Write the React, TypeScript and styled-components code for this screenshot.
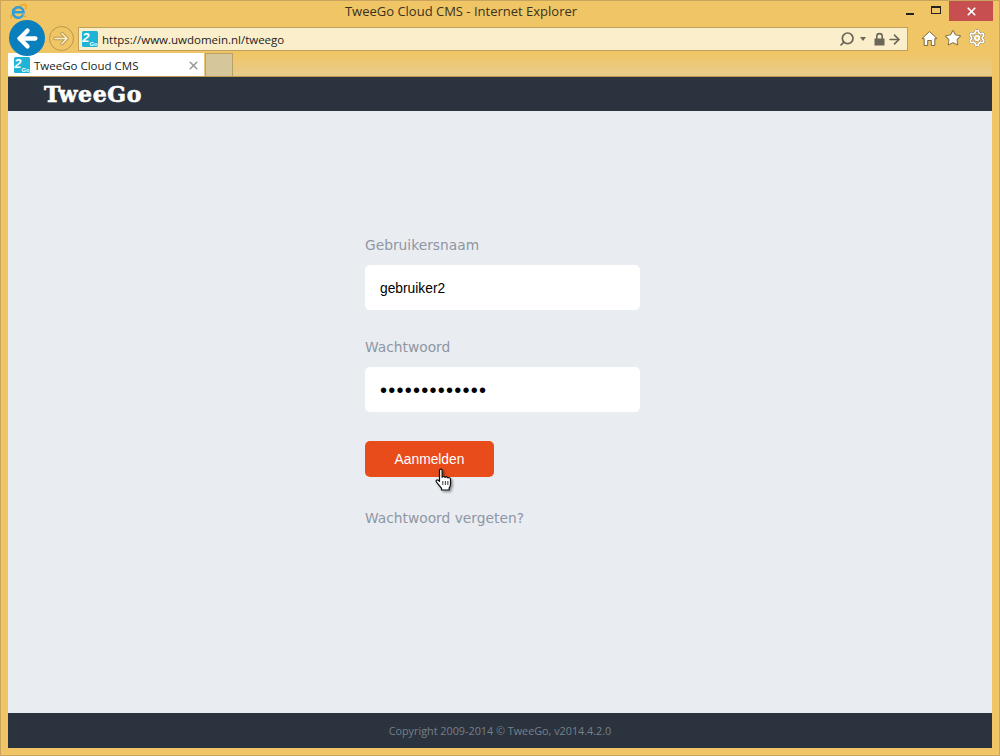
import React from 'react';
import styled, { createGlobalStyle } from 'styled-components';
import { ArrowLeft, ArrowRight, Star, Settings, Search, X } from 'lucide-react';

const GlobalStyle = createGlobalStyle`
  html, body {
    margin: 0;
    padding: 0;
    background: #f0c566;
  }
`;

const FaviconIcon: React.FunctionComponent<{ size: number }> = ({ size }) => (
  <svg width={size} height={size} viewBox="0 0 16 16">
    <rect width="16" height="16" rx="1.5" fill="#1fb3d6" />
    <text x="0.3" y="11" fontFamily="Liberation Sans, sans-serif" fontStyle="italic" fontWeight="700" fontSize="13" fill="#fff">2</text>
    <text x="7.6" y="14.6" fontFamily="Liberation Sans, sans-serif" fontWeight="700" fontSize="5.8" fill="#fff">Go</text>
  </svg>
);

const IeIcon = () => (
  <svg width="17" height="17" viewBox="0 0 17 17">
    <path d="M1.2 15.600C.2 13 5.500 3.500 13.500 1.500c3-.7 3.200 2 2 4.500" fill="none" stroke="#e9a92a" strokeWidth="1.600" />
    <path d="M13.300 11.300a5.300 5.300 0 1 1 .3-2.100H4" fill="none" stroke="#2f9fdc" strokeWidth="2.500" />
    <path d="M13 12.500c1 .9 2 1.200 3 .8" fill="none" stroke="#e9a92a" strokeWidth="1.400" />
  </svg>
);

const HomeIcon = () => (
  <svg width="17" height="17" viewBox="0 0 17 17">
    <path
      d="M8.500 1.500L16 8.600h-2.200V15.500H10.300V10.500H6.700V15.500H3.200V8.600H1z"
      fill="#fff"
      stroke="#7d6a3d"
      strokeWidth="1"
      strokeLinejoin="round"
    />
  </svg>
);

const LockIcon = () => (
  <svg width="11" height="14" viewBox="0 0 11 14">
    <path d="M2.800 7V4.300a2.700 2.700 0 0 1 5.400 0V7" fill="none" stroke="#6b6657" strokeWidth="1.600" />
    <rect x="0.500" y="6.500" width="10" height="7" fill="#6b6657" />
  </svg>
);

const ForwardArrow = () => (
  <svg width="17" height="15" viewBox="0 0 17 15">
    <path d="M2 7.500h12M9 2.500l5 5-5 5" fill="none" stroke="#b9994f" strokeWidth="3.400" strokeLinejoin="round" strokeLinecap="round" />
    <path d="M2 7.500h12M9 2.500l5 5-5 5" fill="none" stroke="#fbeecb" strokeWidth="1.600" strokeLinejoin="round" strokeLinecap="round" />
  </svg>
);

const HandCursor = () => (
  <svg width="22" height="26" viewBox="0 0 20 26" preserveAspectRatio="none">
    <defs>
      <filter id="cursorShadow" x="-30%" y="-30%" width="160%" height="160%">
        <feDropShadow dx="1.500" dy="1.500" stdDeviation="1" floodColor="#000" floodOpacity="0.4" />
      </filter>
    </defs>
    <path
      d="M5 2.200c0-1.500 2.400-1.500 2.400 0v7c.5-1 2.300-1 2.600.2.600-.8 2.300-.7 2.600.5.8-.6 2.400-.3 2.400 1.100v5.600c0 1.600-.8 2.400-1.200 3.400v2H6.800v-1.800c-1-1.200-2.400-3.200-4.600-6.200-1-1.400.6-2.800 1.800-1.600l1 1z"
      fill="#fff"
      stroke="#111"
      strokeWidth="1.100"
      strokeLinejoin="round"
      filter="url(#cursorShadow)"
    />
    <path d="M8 13v4M10.300 13v4M12.600 13v4" stroke="#111" strokeWidth="0.8" />
  </svg>
);

const App: React.FunctionComponent = (): React.ReactElement => (
  <Window>
    <GlobalStyle />
    <TitleBar>
      <IeBadge>
        <IeIcon />
      </IeBadge>
      <Title>TweeGo Cloud CMS - Internet Explorer</Title>
      <WindowControls>
        <ControlButton>
          <MinimizeGlyph />
        </ControlButton>
        <ControlButton>
          <MaximizeGlyph />
        </ControlButton>
        <CloseButton>
          <X size={13} strokeWidth={3.2} color="#fff" />
        </CloseButton>
      </WindowControls>
    </TitleBar>

    <NavBar>
      <BackButton>
        <ArrowLeft size={27} strokeWidth={3.8} color="#fff" />
      </BackButton>
      <ForwardButton>
        <ForwardArrow />
      </ForwardButton>
      <AddressBar>
        <FaviconIcon size={16} />
        <AddressText>https://www.uwdomein.nl/tweego</AddressText>
        <AddressTools>
          <Search size={16} strokeWidth={2.6} color="#6b6657" style={{ transform: 'scaleX(-1)' }} />
          <Caret />
          <LockIcon />
          <ArrowRight size={15} strokeWidth={2.6} color="#6b6657" />
        </AddressTools>
      </AddressBar>
      <ToolIcons>
        <HomeIcon />
        <Star size={18} strokeWidth={1.4} color="#8b7a4c" fill="#fff" />
        <GearWrap>
          <Settings size={18} strokeWidth={2.6} color="#fff" />
        </GearWrap>
      </ToolIcons>
    </NavBar>

    <TabRow>
      <ActiveTab>
        <FaviconIcon size={16} />
        <TabLabel>TweeGo Cloud CMS</TabLabel>
        <X size={13} strokeWidth={3} color="#9a9a9a" />
      </ActiveTab>
      <NewTab />
    </TabRow>

    <Page>
      <Header>
        <Logo>TweeGo</Logo>
      </Header>
      <Main>
        <Field>
          <Label>Gebruikersnaam</Label>
          <Input type="text" value="gebruiker2" readOnly />
        </Field>
        <Field>
          <Label>Wachtwoord</Label>
          <PasswordInput type="password" value="wachtwoord123" readOnly />
        </Field>
        <SubmitWrap>
          <Submit>Aanmelden</Submit>
          <CursorSpot>
            <HandCursor />
          </CursorSpot>
        </SubmitWrap>
        <Forgot>Wachtwoord vergeten?</Forgot>
      </Main>
      <Footer>Copyright 2009-2014 © TweeGo, v2014.4.2.0</Footer>
    </Page>
  </Window>
);

export default App;

// Browser chrome

const Window = styled('div')`
  background: #f0c566;
  box-shadow: inset 0 0 0 1px #c9a45c;
  box-sizing: border-box;
  display: flex;
  flex-direction: column;
  height: 756px;
  overflow: hidden;
  padding: 0 8px 8px;
  width: 1000px;
`;

const TitleBar = styled('div')`
  align-items: flex-start;
  display: flex;
  flex: 0 0 auto;
  height: 20px;
  justify-content: center;
  position: relative;
`;

const IeBadge = styled('div')`
  left: 2px;
  position: absolute;
  top: 3px;
`;

const Title = styled('div')`
  color: #3a3220;
  font: 13px/22px 'Open Sans', sans-serif;
  padding-right: 78px;
`;

const WindowControls = styled('div')`
  align-items: flex-start;
  display: flex;
  position: absolute;
  right: -1px;
  top: 1px;
`;

const ControlButton = styled('div')`
  align-items: center;
  display: flex;
  height: 20px;
  justify-content: center;
  width: 26px;
`;

const MinimizeGlyph = styled('div')`
  background: #222;
  height: 2px;
  margin-top: 5px;
  width: 8px;
`;

const MaximizeGlyph = styled('div')`
  border: 1px solid #222;
  border-top-width: 2px;
  box-sizing: border-box;
  height: 8px;
  margin-bottom: 2px;
  width: 10px;
`;

const CloseButton = styled('div')`
  align-items: center;
  background: #c74f4f;
  display: flex;
  height: 20px;
  justify-content: center;
  width: 44px;
`;

const NavBar = styled('div')`
  align-items: center;
  display: flex;
  flex: 0 0 auto;
  height: 33px;
  position: relative;
  z-index: 2;
`;

const BackButton = styled('div')`
  align-items: center;
  background: #0a7fbd;
  border-radius: 50%;
  display: flex;
  flex: 0 0 auto;
  height: 36px;
  justify-content: center;
  margin: 3px 3px 0 1px;
  width: 36px;
`;

const ForwardButton = styled('div')`
  align-items: center;
  border: 1.500px solid #b9994f;
  border-radius: 50%;
  box-sizing: border-box;
  display: flex;
  flex: 0 0 auto;
  height: 25px;
  justify-content: center;
  margin: 4px 4px 0 1px;
  width: 25px;
`;

const AddressBar = styled('div')`
  align-items: center;
  background: #fbeecb;
  border: 1.500px solid #bf9f5b;
  box-sizing: border-box;
  display: flex;
  flex: 0 0 auto;
  height: 24px;
  margin-top: 5px;
  padding: 0 5px 0 3px;
  width: 830px;
`;

const AddressText = styled('span')`
  color: #1c1c1c;
  flex: 1;
  font: 11.500px 'Open Sans', sans-serif;
  margin-left: 4px;
`;

const AddressTools = styled('div')`
  align-items: center;
  display: flex;
  gap: 2px;
`;

const Caret = styled('div')`
  border-left: 3.500px solid transparent;
  border-right: 3.500px solid transparent;
  border-top: 4px solid #6b6657;
  height: 0;
  margin: 0 6px 0 3px;
  width: 0;
`;

const ToolIcons = styled('div')`
  align-items: center;
  display: flex;
  gap: 6px;
  margin: 3px 0 0 13px;
`;

const GearWrap = styled('div')`
  display: flex;
  filter: drop-shadow(0 0 0.6px #6d5a2d) drop-shadow(0 0 0.6px #6d5a2d);
`;

const TabRow = styled('div')`
  align-items: flex-end;
  background: linear-gradient(180deg, #f0c566 0%, #e8cb8c 100%);
  display: flex;
  flex: 0 0 auto;
  height: 23px;
`;

const ActiveTab = styled('div')`
  align-items: center;
  background: #fff;
  box-sizing: border-box;
  display: flex;
  height: 23px;
  padding: 1px 4px 0 6px;
  width: 196px;
`;

const TabLabel = styled('span')`
  color: #222;
  flex: 1;
  font: 11.500px 'Open Sans', sans-serif;
  margin-left: 4px;
`;

const NewTab = styled('div')`
  background: #d6c69c;
  border: 1px solid #b9a067;
  border-bottom: 0;
  box-sizing: border-box;
  height: 23px;
  margin-left: 1px;
  width: 28px;
`;

// Page

const Page = styled('div')`
  background: #e9ecf1;
  display: flex;
  flex: 1;
  flex-direction: column;
  min-height: 0;
`;

const Header = styled('div')`
  align-items: center;
  background: #2a333e;
  border-top: 1px solid #b9994f;
  box-sizing: border-box;
  display: flex;
  flex: 0 0 auto;
  height: 35px;
  padding-left: 36px;
`;

const Logo = styled('div')`
  -webkit-text-stroke: 0.6px #fff;
  color: #fff;
  font: 700 22px 'DejaVu Serif', serif;
  letter-spacing: 0.6px;
  margin-top: -1px;
`;

const Main = styled('div')`
  box-sizing: border-box;
  display: flex;
  flex: 1;
  flex-direction: column;
  padding: 126px 0 0 357px;
`;

const Field = styled('div')`
  display: flex;
  flex-direction: column;
  margin-bottom: 29px;
  width: 275px;
`;

const Label = styled('label')`
  color: #8f96a3;
  font: 13.800px/17px 'DejaVu Sans', sans-serif;
  margin-bottom: 11px;
`;

const Input = styled('input')`
  background: #fff;
  border: 0;
  border-radius: 5px;
  box-sizing: border-box;
  color: #000;
  font: 13.800px 'Liberation Sans', sans-serif;
  height: 45px;
  outline: 0;
  padding: 1px 15px 0;
  width: 275px;
`;

const PasswordInput = styled(Input)`
  font-size: 20px;
  letter-spacing: 1.250px;
`;

const SubmitWrap = styled('div')`
  position: relative;
  width: 129px;
`;

const Submit = styled('button')`
  background: #e84c1a;
  border: 0;
  border-radius: 5px;
  color: #fff;
  display: block;
  font: 13.800px 'Liberation Sans', sans-serif;
  height: 36px;
  padding: 0;
  width: 129px;
`;

const CursorSpot = styled('div')`
  left: 69px;
  position: absolute;
  top: 27px;
`;

const Forgot = styled('a')`
  color: #8f96a3;
  font: 13.800px/17px 'DejaVu Sans', sans-serif;
  margin-top: 33px;
`;

const Footer = styled('div')`
  align-items: center;
  background: #2a333e;
  color: #78808a;
  display: flex;
  flex: 0 0 auto;
  font: 10.800px 'Open Sans', sans-serif;
  height: 35px;
  justify-content: center;
`;
